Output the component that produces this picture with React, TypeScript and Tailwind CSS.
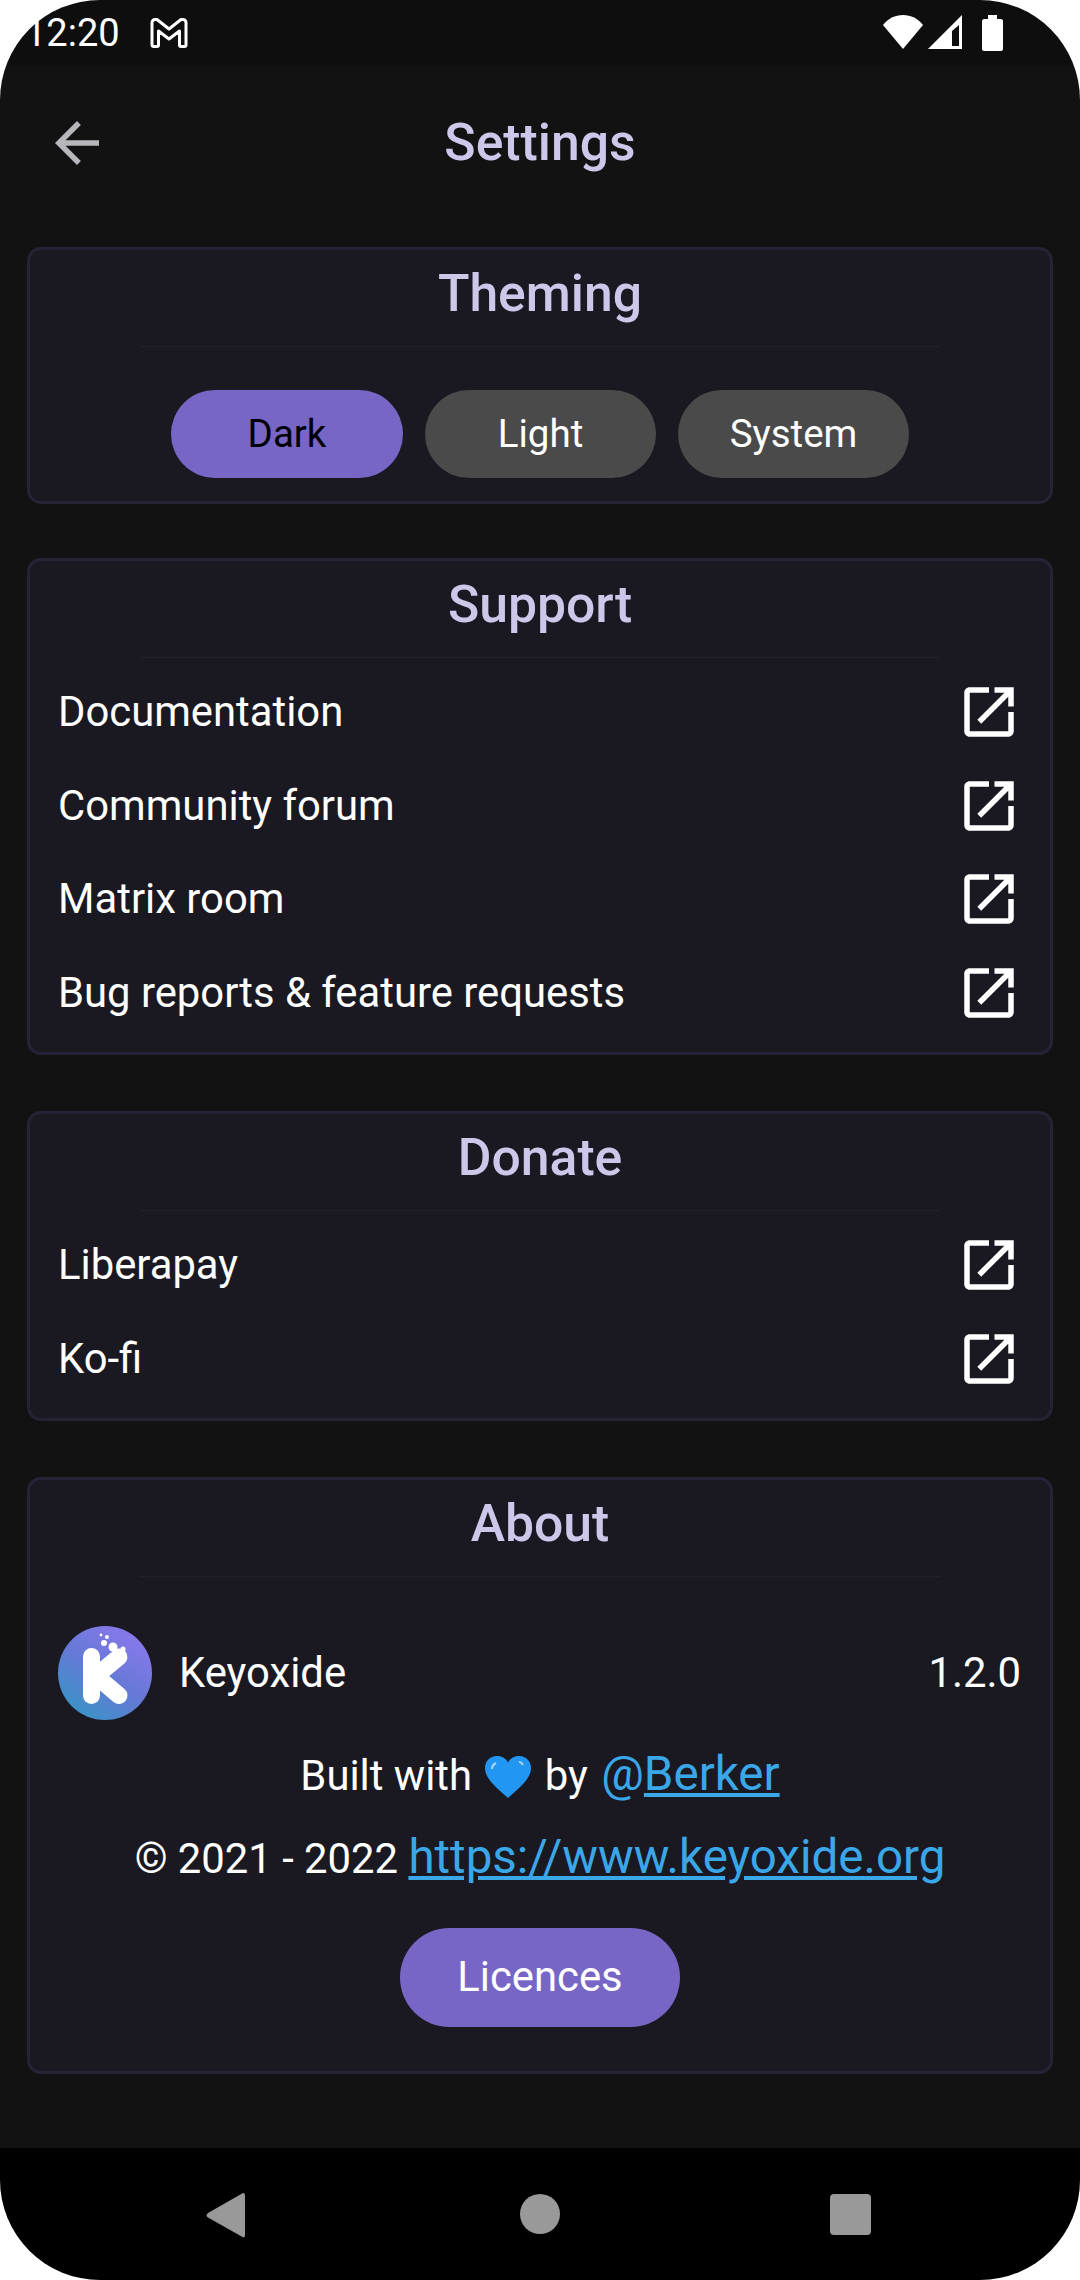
import type { ReactNode } from 'react';

const ExternalIcon = () => (
  <svg viewBox="0 0 24 24" className="w-[66px] h-[66px] shrink-0" fill="#ffffff">
    <path d="M19 19H5V5h7V3H5c-1.11 0-2 .9-2 2v14c0 1.1.89 2 2 2h14c1.1 0 2-.9 2-2v-7h-2v7zM14 3v2h3.59l-9.83 9.83 1.41 1.41L19 6.41V10h2V3h-7z" />
  </svg>
);

const Card = ({ title, children }: { title: string; children: ReactNode }) => (
  <section className="border-[3px] border-[#262337] rounded-[14px] bg-[#1a1922]">
    <div className="h-[96px] pb-[8px] flex items-center justify-center text-[51.7px] leading-[60px] font-medium text-[#cdc7ea]">{title}</div>
    <div className="h-px w-[800px] mx-auto bg-[#24212f]" />
    {children}
  </section>
);

const LinkRow = ({ label }: { label: string }) => (
  <div className="h-[93.5px] pl-[28px] pr-[28px] flex items-center justify-between text-white text-[41.8px] leading-[50px]">
    <span>{label}</span>
    <ExternalIcon />
  </div>
);

const ThemeButton = ({ label, active }: { label: string; active?: boolean }) => (
  <button
    className={
      active
        ? 'w-[232px] h-[88px] rounded-[44px] bg-[#7766c6] text-black text-[38.5px]'
        : 'w-[231px] h-[88px] rounded-[44px] bg-[#4a4a4a] text-white text-[38.5px]'
    }
  >
    {label}
  </button>
);

const KeyoxideLogo = () => (
  <svg viewBox="0 0 94 94" className="w-[94px] h-[94px] shrink-0">
    <defs>
      <linearGradient id="keyoxide-bg" x1="0.2" y1="0.95" x2="0.8" y2="0.1">
        <stop offset="0" stopColor="#3a93c6" />
        <stop offset="0.5" stopColor="#6579d6" />
        <stop offset="1" stopColor="#8778ea" />
      </linearGradient>
    </defs>
    <circle cx="47" cy="47" r="47" fill="url(#keyoxide-bg)" />
    <g stroke="#ffffff" strokeWidth="17" strokeLinecap="round" fill="none">
      <path d="M33.5 30.5V69.5" />
      <path d="M38 50L61 31" />
      <path d="M38 50L61 69.5" />
    </g>
    <g fill="#ffffff">
      <circle cx="46" cy="17" r="3" />
      <circle cx="55" cy="21" r="4.5" />
      <circle cx="65" cy="23" r="2.5" />
      <circle cx="49" cy="11" r="2" />
      <circle cx="43" cy="9" r="1.4" />
    </g>
  </svg>
);

const Heart = () => (
  <svg viewBox="0 0 46 42" className="w-[46px] h-[42px] mx-[3px] inline-block align-[-8px]">
    <path d="M23 42C12 32 0 23 0 12 0 5 5 0 12 0c5 0 9 2.5 11 6.5C25 2.500 29 0 34 0c7 0 12 5 12 12 0 11-12 20-23 30z" fill="#2196f3" />
    <path d="M7 13c0-3 2-5 4-6M34 6c2 0 3 1 4 3" stroke="#a9d3f7" strokeWidth="2" fill="none" />
  </svg>
);

const StatusBar = () => (
  <div className="relative h-[66px] shrink-0 bg-[#0e0e0e] text-white">
    <span className="absolute left-[25px] top-[10px] text-[38px] leading-[46px]">12:20</span>
    <svg viewBox="0 0 38 30" className="absolute left-[150px] top-[18px] w-[38px] h-[30px]" fill="none" stroke="#ffffff" strokeWidth="3" strokeLinejoin="round">
      <path d="M2 27V4.500C2 2.800 3.500 1.500 5 1.500H7L19 11 31 1.500H33C34.500 1.500 36 2.800 36 4.500V27C36 28 35.300 28.500 34.500 28.500H31C30 28.500 29.500 28 29.500 27V13L19 21 8.500 13V27C8.500 28 8 28.500 7 28.500H3.500C2.700 28.500 2 28 2 27Z" />
    </svg>
    <svg viewBox="0 0 40 34" className="absolute left-[883px] top-[15px] w-[40px] h-[34px]" fill="#ffffff">
      <path d="M20 34L0 10C5 3.500 12 0 20 0S35 3.500 40 10Z" />
    </svg>
    <svg viewBox="0 0 34 34" className="absolute left-[928px] top-[15px] w-[34px] h-[34px]" fill="#ffffff">
      <path fillRule="evenodd" d="M34 0V34H0ZM31 10L24 16V31H31Z" />
    </svg>
    <svg viewBox="0 0 21 36" className="absolute left-[982px] top-[15px] w-[21px] h-[36px]" fill="#ffffff">
      <path d="M6 0H15V4H19C20 4 21 5 21 6V34C21 35 20 36 19 36H2C1 36 0 35 0 34V6C0 5 1 4 2 4H6Z" />
    </svg>
  </div>
);

const NavBar = () => (
  <div className="h-[132px] shrink-0 bg-black flex items-start pt-[44px]">
    <svg viewBox="0 0 1080 48" className="w-[1080px] h-[48px]" fill="#999999">
      <path d="M243 1C244.500 1 245 2 245 4V43C245 45 244 46 242.500 45L208 25.500C206 24 206 22.500 208 21Z" />
      <circle cx="540" cy="22" r="20" />
      <rect x="830" y="2" width="41" height="41" rx="4" />
    </svg>
  </div>
);

const App = () => {
  return (
    <div className="relative w-[1080px] h-[2280px] overflow-hidden bg-[#121212] flex flex-col font-[Roboto,sans-serif]">
      <StatusBar />

      <header className="relative h-[154px] shrink-0 flex items-center justify-center">
        <svg viewBox="0 0 24 24" className="absolute left-[44px] top-[44px] w-[66px] h-[66px]" fill="#b7b7bb">
          <path d="M20 11H7.830l5.590-5.590L12 4l-8 8 8 8 1.410-1.410L7.830 13H20v-2z" />
        </svg>
        <h1 className="text-[51.7px] leading-[60px] font-medium text-[#cdc7ea]">Settings</h1>
      </header>

      <main className="flex-1 px-[27px] pt-[27px] flex flex-col">
        <Card title="Theming">
          <div className="pt-[43px] pb-[23px] flex justify-center gap-[22px]">
            <ThemeButton label="Dark" active />
            <ThemeButton label="Light" />
            <ThemeButton label="System" />
          </div>
        </Card>

        <div className="mt-[54px]">
          <Card title="Support">
            <div className="pt-[7.5px] pb-[12.5px]">
              <LinkRow label="Documentation" />
              <LinkRow label="Community forum" />
              <LinkRow label="Matrix room" />
              <LinkRow label="Bug reports & feature requests" />
            </div>
          </Card>
        </div>

        <div className="mt-[56px]">
          <Card title="Donate">
            <div className="pt-[7.5px] pb-[12.5px]">
              <LinkRow label="Liberapay" />
              <LinkRow label="Ko-fi" />
            </div>
          </Card>
        </div>

        <div className="mt-[56px]">
          <Card title="About">
            <div className="pt-[49px] pb-[44px] text-white">
              <div className="pl-[28px] pr-[29px] flex items-center text-[41.8px] leading-[50px]">
                <KeyoxideLogo />
                <span className="ml-[27px]">Keyoxide</span>
                <span className="ml-auto">1.2.0</span>
              </div>
              <p className="mt-[29px] text-center text-[41.8px] leading-[50px]">
                Built with <Heart /> by <span className="ml-[3px] text-[47.5px] text-[#3aa7e8]">@<span className="underline">Berker</span></span>
              </p>
              <p className="mt-[31px] text-center text-[41.8px] leading-[50px]">
                © 2021 - 2022 <span className="text-[47.5px] text-[#3aa7e8] underline">https://www.keyoxide.org</span>
              </p>
              <div className="mt-[44px] flex justify-center">
                <button className="w-[280px] h-[99px] rounded-[50px] bg-[#7766c6] text-white text-[41.8px]">Licences</button>
              </div>
            </div>
          </Card>
        </div>
      </main>

      <NavBar />

      {/* white display corners */}
      <div className="pointer-events-none absolute inset-0 rounded-[100px] shadow-[0_0_0_120px_#ffffff]" />
    </div>
  );
};

export default App;
